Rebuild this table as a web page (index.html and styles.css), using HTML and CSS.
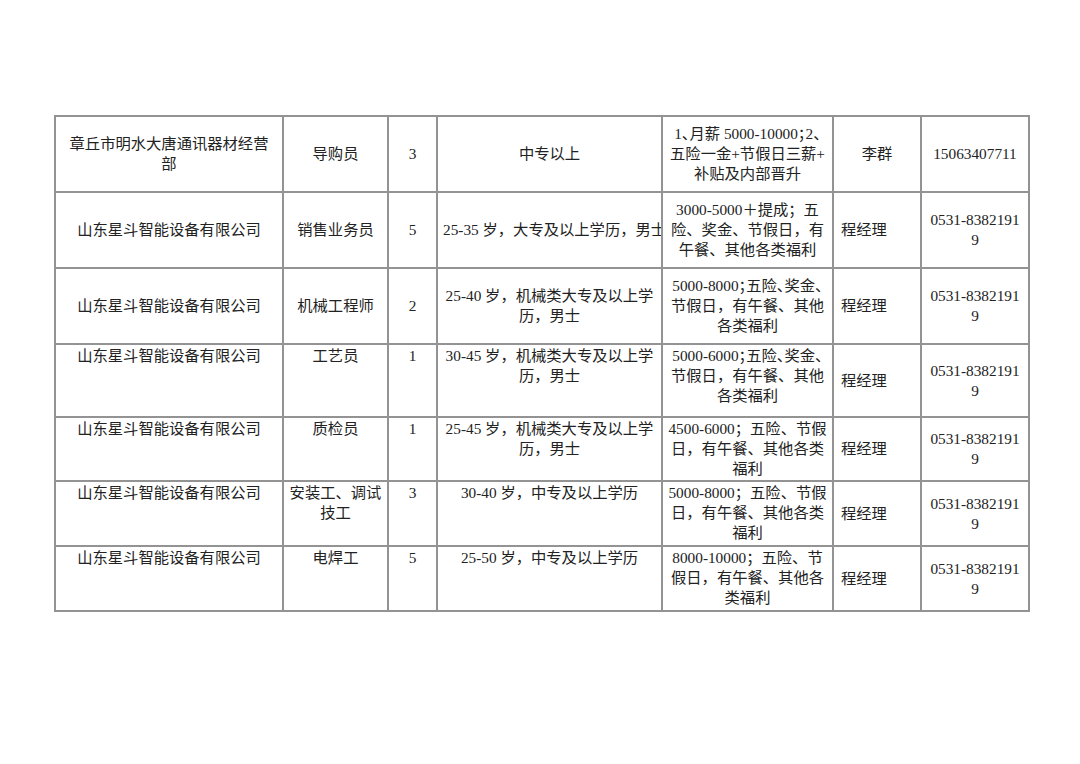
FILE: index.html
```html
<!DOCTYPE html>
<html lang="zh-CN">
<head>
<meta charset="utf-8">
<title>招聘信息</title>
<link rel="stylesheet" href="styles.css">
</head>
<body>
<div class="page">
  <table class="jobs">
    <colgroup>
      <col class="w-company">
      <col class="w-post">
      <col class="w-num">
      <col class="w-req">
      <col class="w-pay">
      <col class="w-contact">
      <col class="w-phone">
    </colgroup>
    <tbody>
      <tr class="r1">
        <td>章丘市明水大唐通讯器材经营<br>部</td>
        <td>导购员</td>
        <td class="num">3</td>
        <td>中专以上</td>
        <td class="pay"><span class="tight">1、月薪 5000-10000；2、</span><br>五险一金+节假日三薪+<br>补贴及内部晋升</td>
        <td>李群</td>
        <td class="num">15063407711</td>
      </tr>
      <tr class="r2">
        <td>山东星斗智能设备有限公司</td>
        <td>销售业务员</td>
        <td class="num">5</td>
        <td class="req clip">25-35 岁，大专及以上学历，男士</td>
        <td class="pay">3000-5000＋提成；五<br>险、奖金、节假日，有<br>午餐、其他各类福利</td>
        <td class="who">程经理</td>
        <td class="num">0531-8382191<br>9</td>
      </tr>
      <tr class="r3">
        <td>山东星斗智能设备有限公司</td>
        <td>机械工程师</td>
        <td class="num">2</td>
        <td class="req">25-40 岁，机械类大专及以上学<br>历，男士</td>
        <td class="pay"><span class="tight">5000-8000；五险、奖金、</span><br>节假日，有午餐、其他<br>各类福利</td>
        <td class="who">程经理</td>
        <td class="num">0531-8382191<br>9</td>
      </tr>
      <tr class="r4 top">
        <td>山东星斗智能设备有限公司</td>
        <td>工艺员</td>
        <td class="num">1</td>
        <td class="req">30-45 岁，机械类大专及以上学<br>历，男士</td>
        <td class="pay"><span class="tight">5000-6000；五险、奖金、</span><br>节假日，有午餐、其他<br>各类福利</td>
        <td class="who">程经理</td>
        <td class="num">0531-8382191<br>9</td>
      </tr>
      <tr class="r5 top">
        <td>山东星斗智能设备有限公司</td>
        <td>质检员</td>
        <td class="num">1</td>
        <td class="req">25-45 岁，机械类大专及以上学<br>历，男士</td>
        <td class="pay">4500-6000；五险、节假<br>日，有午餐、其他各类<br>福利</td>
        <td class="who">程经理</td>
        <td class="num">0531-8382191<br>9</td>
      </tr>
      <tr class="r6 top">
        <td>山东星斗智能设备有限公司</td>
        <td>安装工、调试<br>技工</td>
        <td class="num">3</td>
        <td class="req">30-40 岁，中专及以上学历</td>
        <td class="pay">5000-8000；五险、节假<br>日，有午餐、其他各类<br>福利</td>
        <td class="who">程经理</td>
        <td class="num">0531-8382191<br>9</td>
      </tr>
      <tr class="r7 top">
        <td>山东星斗智能设备有限公司</td>
        <td>电焊工</td>
        <td class="num">5</td>
        <td class="req">25-50 岁，中专及以上学历</td>
        <td class="pay">8000-10000；五险、节<br>假日，有午餐、其他各<br>类福利</td>
        <td class="who">程经理</td>
        <td class="num">0531-8382191<br>9</td>
      </tr>
    </tbody>
  </table>
</div>
</body>
</html>
```

FILE: styles.css
```css
html, body {
  margin: 0;
  padding: 0;
  background: #ffffff;
}

.page {
  width: 1080px;
  height: 764px;
  padding: 115px 0 0 54px;
  box-sizing: border-box;
}

.jobs {
  border-collapse: collapse;
  table-layout: fixed;
  width: 976px;
  font-family: "Liberation Serif", "Noto Sans CJK SC", serif;
  font-size: 15.3px;
  line-height: 20px;
  color: #222222;
}

.w-company { width: 228px; }
.w-post { width: 105px; }
.w-num { width: 49px; }
.w-req { width: 225px; }
.w-pay { width: 171px; }
.w-contact { width: 88px; }
.w-phone { width: 108px; }

.jobs td {
  border: 2px solid #939393;
  padding: 0 4px;
  text-align: center;
  vertical-align: middle;
  white-space: nowrap;
  overflow: hidden;
}

.r1, .r2, .r3 { height: 76px; }
.r4 { height: 73px; }
.r5 { height: 64px; }
.r6, .r7 { height: 65px; }

.jobs tr.top td {
  vertical-align: top;
  padding-top: 1px;
}

.jobs tr.top td.who,
.jobs tr.top td:last-child {
  vertical-align: middle;
  padding-top: 0;
}

.jobs td.who {
  text-align: left;
  padding-left: 7px;
}

.jobs td.clip {
  text-align: left;
  padding-left: 5px;
}

.tight {
  font-feature-settings: "halt" 1;
}
```
